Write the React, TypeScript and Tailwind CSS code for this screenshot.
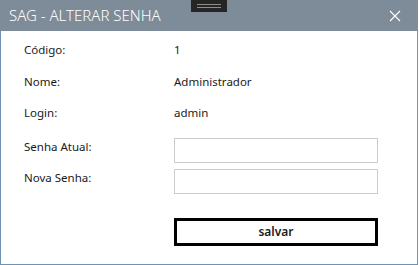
export default function App() {
  const font = { fontFamily: '"Segoe UI", "Noto Sans", "Open Sans", sans-serif' }
  return (
    <div className="h-[265px] w-[419px] bg-white" style={font}>
      <div className="flex h-[265px] w-[418px] flex-col border-r border-[#6e93b4]">
        <div className="relative flex h-[31px] shrink-0 items-center justify-between bg-[#7e8b99] pl-[9px] pr-[16px]">
          <span className="text-[15px] font-light leading-none text-white">SAG - ALTERAR SENHA</span>
          <svg width="12" height="12" viewBox="0 0 12 12" className="text-white">
            <path d="M1 1 L11 11 M11 1 L1 11" stroke="currentColor" strokeWidth="1.1" />
          </svg>
          <div className="absolute left-[191px] top-0 flex h-[12px] w-[36px] flex-col items-center justify-center gap-[2px] bg-[#252525]">
            <div className="h-px w-[24px] bg-[#8c8c8c]" />
            <div className="h-px w-[24px] bg-[#8c8c8c]" />
          </div>
        </div>
        <div className="flex flex-1 flex-col border-b border-l border-[#6e93b4] pl-[23px] pt-[11px] text-[11.5px] leading-[16px] text-[#1a1a1a]">
          <div className="flex h-[32px]">
            <span className="w-[150px]">Código:</span>
            <span>1</span>
          </div>
          <div className="flex h-[31px]">
            <span className="w-[150px]">Nome:</span>
            <span>Administrador</span>
          </div>
          <div className="flex h-[33px]">
            <span className="w-[150px]">Login:</span>
            <span>admin</span>
          </div>
          <div className="flex h-[31px]">
            <span className="w-[150px] pt-px">Senha Atual:</span>
            <input type="password" className="h-[25px] w-[204px] border border-[#cccccc] bg-white outline-none" />
          </div>
          <div className="flex h-[25px]">
            <span className="w-[150px] pt-px">Nova Senha:</span>
            <input type="password" className="h-[25px] w-[204px] border border-[#cccccc] bg-white outline-none" />
          </div>
          <div className="mt-[24px] flex">
            <div className="w-[150px]" />
            <button className="h-[28px] w-[204px] border-[3px] border-black bg-white text-[12px] font-semibold text-[#1a1a1a]">
              salvar
            </button>
          </div>
        </div>
      </div>
    </div>
  )
}
